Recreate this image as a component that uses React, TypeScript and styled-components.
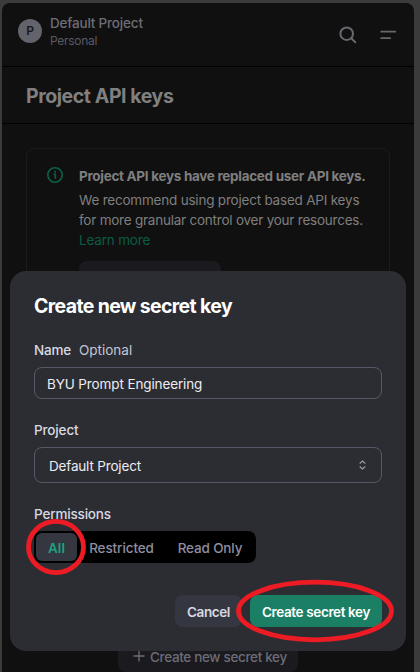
import React from "react";
import styled, { createGlobalStyle } from "styled-components";

const GlobalStyle = createGlobalStyle`
  *, *::before, *::after { box-sizing: border-box; }
  html, body { margin: 0; background: #3b3b3b; }
  body { font-family: Inter, "Liberation Sans", sans-serif; font-size: 13.5px; line-height: 20px; overflow: hidden; }
`;

const Screen = styled.div`
  position: relative;
  width: 420px;
  height: 672px;
  padding: 3px 6px 0 2px;
  overflow: hidden;
  background: #3b3b3b;
`;

const Page = styled.div`
  display: flex;
  flex-direction: column;
  height: 669px;
  border-radius: 8px 8px 0 0;
  background: #101010;
  color: #7f7f7f;
`;

const Header = styled.header`
  display: flex;
  align-items: center;
  height: 64px;
  padding: 0 16px 0 16px;
  border-bottom: 1px solid #000;
`;

const Avatar = styled.div`
  display: flex;
  align-items: center;
  justify-content: center;
  width: 24px;
  height: 24px;
  margin-top: -7px;
  border-radius: 50%;
  background: #63636b;
  color: #18181b;
  font-size: 12px;
  font-weight: 600;
`;

const Account = styled.div`
  flex: 1;
  margin: -7px 0 0 8px;
  color: #6d6d77;
`;

const Label = styled.div<{ $track?: number; $weight?: number }>`
  font-weight: ${(p) => p.$weight ?? 400};
  letter-spacing: ${(p) => p.$track ?? 0}px;
  white-space: nowrap;
`;

const SmallLabel = styled(Label)`
  font-size: 12px;
  line-height: 16px;
  color: #5a5a63;
`;

const HeaderIcons = styled.div`
  display: flex;
  align-items: center;
  gap: 20px;
  svg { display: block; }
`;

const TitleBar = styled.div`
  display: flex;
  align-items: center;
  height: 57px;
  padding: 2px 24px 0;
  border-bottom: 1px solid #000;
`;

const PageTitle = styled.h1`
  margin: 0;
  font-size: 19.5px;
  line-height: 28px;
  font-weight: 700;
  letter-spacing: -0.43px;
  color: #808080;
`;

const Notice = styled.section`
  display: flex;
  gap: 16px;
  height: 470px;
  margin: 24px 24px 0;
  padding: 17px 20px;
  border: 1px solid #1b1b20;
  border-radius: 8px;
  svg { display: block; flex: none; margin-top: 1px; }
`;

const NoticeText = styled.div`
  display: flex;
  flex-direction: column;
  align-items: flex-start;
`;

const NoticeHeading = styled(Label)`
  margin-bottom: 4px;
`;

const Link = styled(Label)`
  color: #0a5d44;
`;

const NoticeButton = styled.div`
  width: 142px;
  height: 32px;
  margin-top: 11px;
  border-radius: 8px;
  background: #1a1a1f;
`;

const NewKeyButton = styled.div`
  position: absolute;
  left: 118px;
  top: 640px;
  display: flex;
  align-items: center;
  gap: 5px;
  width: 180px;
  height: 32px;
  padding: 2px 0 0 15px;
  border-radius: 8px;
  background: #1a1a1f;
  color: #6d6d77;
  svg { display: block; margin-top: -2px; }
`;

const Dialog = styled.div`
  position: absolute;
  left: 10px;
  top: 271px;
  display: flex;
  flex-direction: column;
  width: 396px;
  height: 380px;
  padding: 21px 24px 24px;
  border-radius: 16px;
  background: #2c2d32;
  color: #d9d9e3;
`;

const DialogTitle = styled.h2`
  margin: 0;
  font-size: 19.5px;
  line-height: 28px;
  font-weight: 700;
  letter-spacing: -0.65px;
  color: #fff;
`;

const FieldLabel = styled.div`
  display: flex;
  gap: 8px;
  height: 27px;
  margin-top: 20px;
`;

const Muted = styled(Label)`
  color: #c5c5d2;
`;

const Field = styled.div<{ $height: number; $inset: number }>`
  display: flex;
  align-items: center;
  justify-content: space-between;
  height: ${(p) => p.$height}px;
  margin-bottom: 1px;
  padding: 2px 15px 0 ${(p) => p.$inset}px;
  border: 1px solid #565869;
  border-radius: 8px;
  color: #ececf1;
  svg { display: block; margin-top: -3px; }
`;

const Segments = styled.div`
  display: flex;
  align-self: flex-start;
  width: 222px;
  height: 32px;
  padding: 2px;
  border-radius: 8px;
  background: #000;
`;

const Segment = styled.div<{ $active?: boolean; $width: number }>`
  display: flex;
  align-items: center;
  justify-content: center;
  width: ${(p) => p.$width}px;
  padding-top: 2px;
  border-radius: 6px;
  background: ${(p) => (p.$active ? "#353740" : "transparent")};
  color: ${(p) => (p.$active ? "#19a37f" : "#8e8ea0")};
`;

const Actions = styled.div`
  display: flex;
  justify-content: flex-end;
  gap: 8px;
  margin-top: 32px;
`;

const Button = styled.div<{ $primary?: boolean; $width: number }>`
  display: flex;
  align-items: center;
  justify-content: center;
  width: ${(p) => p.$width}px;
  height: 32px;
  padding-top: 2px;
  border-radius: 8px;
  background: ${(p) => (p.$primary ? "#1a7f64" : "#353740")};
  color: ${(p) => (p.$primary ? "#fff" : "#d9d9e3")};
`;

const Marks = styled.svg`
  position: absolute;
  inset: 0;
`;

export default function App() {
  return (
    <Screen>
      <GlobalStyle />
      <Page>
        <Header>
          <Avatar>P</Avatar>
          <Account>
            <Label $weight={500} $track={-0.19}>Default Project</Label>
            <SmallLabel $track={-0.27}>Personal</SmallLabel>
          </Account>
          <HeaderIcons>
            <svg width="20" height="20" viewBox="0 0 20 20" fill="none" stroke="#67676e" strokeWidth="2">
              <circle cx="8.7" cy="8.7" r="6.3" />
              <path d="M13.2 13.2L17.3 17.3" strokeLinecap="round" />
            </svg>
            <svg width="20" height="20" viewBox="0 0 20 20" fill="none" stroke="#67676e" strokeWidth="1.8" strokeLinecap="round">
              <path d="M3.2 6.7H17.2M3.2 13.2H12.2" />
            </svg>
          </HeaderIcons>
        </Header>
        <TitleBar>
          <PageTitle>Project API keys</PageTitle>
        </TitleBar>
        <Notice>
          <svg width="16" height="16" viewBox="0 0 16 16" fill="none" stroke="#0b6148" strokeWidth="1.6">
            <circle cx="8" cy="8" r="7.2" />
            <path d="M6.5 7.3H8.3V11.8" />
            <circle cx="8.1" cy="4.7" r="1.05" fill="#0b6148" stroke="none" />
          </svg>
          <NoticeText>
            <NoticeHeading $weight={700} $track={-0.3}>Project API keys have replaced user API keys.</NoticeHeading>
            <Label $track={-0.21}>We recommend using project based API keys</Label>
            <Label $track={-0.23}>for more granular control over your resources.</Label>
            <Link $track={-0.18}>Learn more</Link>
            <NoticeButton />
          </NoticeText>
        </Notice>
      </Page>
      <NewKeyButton>
        <svg width="12" height="12" viewBox="0 0 12 12" stroke="#6d6d77" strokeWidth="1.3">
          <path d="M6 0.5V11.5M0.5 6H11.5" />
        </svg>
        <Label $weight={500} $track={-0.34}>Create new secret key</Label>
      </NewKeyButton>
      <Dialog>
        <DialogTitle>Create new secret key</DialogTitle>
        <FieldLabel>
          <Label $weight={500} $track={-0.2}>Name</Label>
          <Muted>Optional</Muted>
        </FieldLabel>
        <Field $height={32} $inset={12}>
          <Label $track={-0.12}>BYU Prompt Engineering</Label>
        </Field>
        <FieldLabel>
          <Label $weight={500} $track={-0.14}>Project</Label>
        </FieldLabel>
        <Field $height={36} $inset={14}>
          <Label $track={-0.17}>Default Project</Label>
          <svg width="7" height="10" viewBox="0 0 7 10" fill="none" stroke="#9a9aab" strokeWidth="1.1">
            <path d="M0.7 3.5L3.5 1L6.3 3.5M0.7 6.5L3.5 9L6.3 6.5" />
          </svg>
        </Field>
        <FieldLabel>
          <Label $weight={500} $track={-0.17}>Permissions</Label>
        </FieldLabel>
        <Segments>
          <Segment $width={41} $active><Label $weight={600}>All</Label></Segment>
          <Segment $width={89}><Label $weight={500} $track={-0.1}>Restricted</Label></Segment>
          <Segment $width={88}><Label $weight={500} $track={-0.15}>Read Only</Label></Segment>
        </Segments>
        <Actions>
          <Button $width={67}><Label $weight={600} $track={-0.38}>Cancel</Label></Button>
          <Button $primary $width={132}><Label $weight={600} $track={-0.37}>Create secret key</Label></Button>
        </Actions>
      </Dialog>
      <Marks width="420" height="672" viewBox="0 0 420 672" fill="none" stroke="#ed1c24" strokeWidth="4.8">
        <ellipse cx="56" cy="547" rx="27.5" ry="25.6" />
        <ellipse cx="315" cy="611" rx="76.5" ry="28.8" />
      </Marks>
    </Screen>
  );
}
